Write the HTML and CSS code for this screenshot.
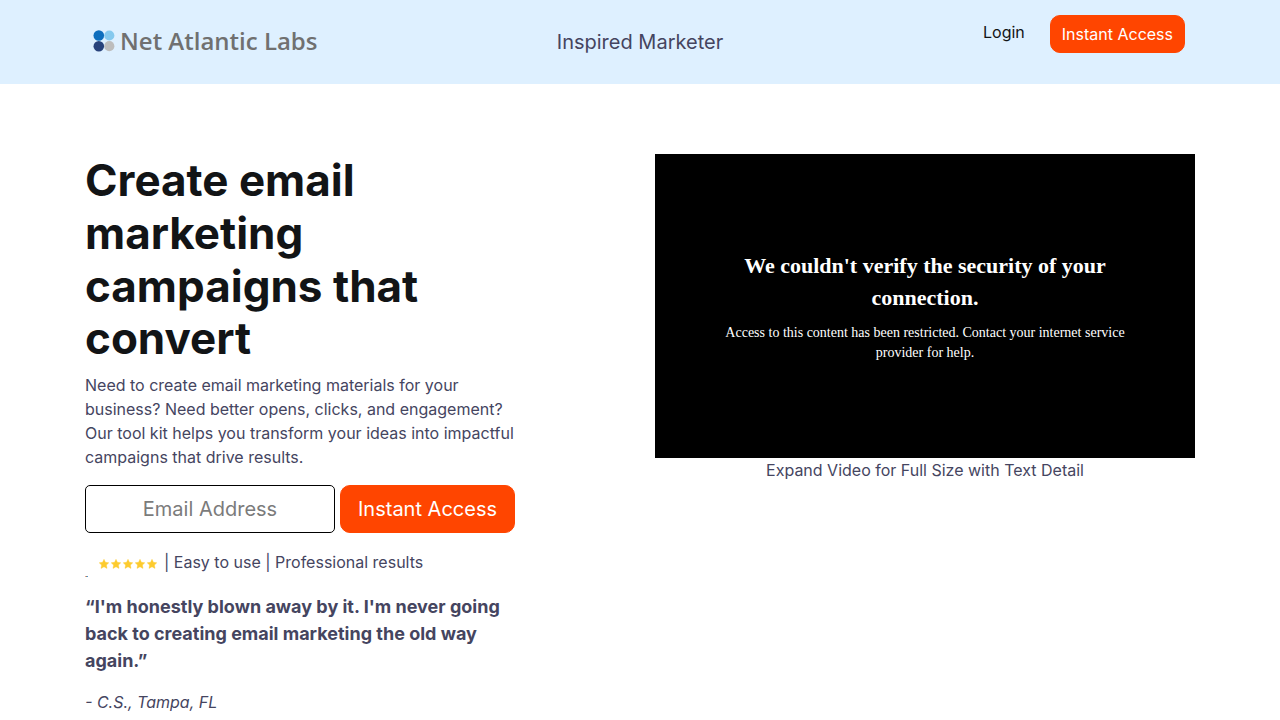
FILE: index.html
```html
<!DOCTYPE html>
<html lang="en">
<head>
    <meta charset="UTF-8">
    <meta name="viewport" content="width=device-width, initial-scale=1.0">
    <title>Inspired Marketer</title>
    <link rel="stylesheet" href="styles.css">
</head>
<body>
    <header class="site-header">
        <div class="container header-row">
            <a href="#" class="logo">
                <svg class="logo-mark" viewBox="0 0 22 22" aria-hidden="true">
                    <circle cx="5.8" cy="5.5" r="5.3" fill="#0d6ebd"/>
                    <circle cx="16.3" cy="5.5" r="5.1" fill="#85c9ee"/>
                    <circle cx="5.8" cy="16.2" r="5.3" fill="#27427b"/>
                    <circle cx="16.3" cy="16.2" r="5.1" fill="#bdbdbd"/>
                </svg>
                <span class="logo-text">Net Atlantic Labs</span>
            </a>
            <div class="site-title">Inspired Marketer</div>
            <nav class="header-nav">
                <a href="#" class="nav-link">Login</a>
                <a href="#" class="btn">Instant Access</a>
            </nav>
        </div>
    </header>

    <main class="container hero">
        <section class="hero-copy">
            <h1>Create email marketing campaigns that convert</h1>
            <p>Need to create email marketing materials for your business? Need better opens, clicks, and engagement? Our tool kit helps you transform your ideas into impactful campaigns that drive results.</p>

            <form class="signup">
                <input type="email" class="email-input" name="email" placeholder="Email Address" aria-label="Email Address">
                <button type="submit" class="btn btn-lg">Instant Access</button>
            </form>

            <div class="rating">
                <svg class="rating-badge" viewBox="0 0 3 1" aria-hidden="true">
                    <rect width="1" height="1" fill="#e8a08a"/>
                    <rect x="1" width="1" height="1" fill="#8c8a6a"/>
                    <rect x="2" width="1" height="1" fill="#4a90d9"/>
                </svg>
                <svg class="stars" viewBox="0 0 60 12" aria-hidden="true">
                    <defs>
                        <path id="star" d="M6 1.3 7.4 4.3 10.8 4.8 8.4 7.1 9 10.4 6 8.8 3 10.4 3.6 7.1 1.2 4.8 4.6 4.3Z" fill="#fdcb2e" stroke="#fdcb2e" stroke-width=".4" stroke-linejoin="round"/>
                    </defs>
                    <use href="#star"/>
                    <use href="#star" x="12"/>
                    <use href="#star" x="24"/>
                    <use href="#star" x="36"/>
                    <use href="#star" x="48"/>
                </svg>
                <span>| Easy to use | Professional results</span>
            </div>

            <blockquote class="quote">
                <p class="quote-text">“I'm honestly blown away by it. I'm never going back to creating email marketing the old way again.”</p>
                <p class="quote-author">- C.S., Tampa, FL</p>
            </blockquote>
        </section>

        <section class="hero-video">
            <div class="video">
                <h2>We couldn't verify the security of your connection.</h2>
                <p>Access to this content has been restricted. Contact your internet service provider for help.</p>
            </div>
            <div class="video-caption">Expand Video for Full Size with Text Detail</div>
        </section>
    </main>
</body>
</html>
```

FILE: styles.css
```css
* {
    box-sizing: border-box;
}
body {
    font-family: Inter, sans-serif;
    font-size: 16px;
    line-height: 1.5;
    margin: 0;
    background-color: #fff;
    color: #45455f;
}
p {
    margin: 0 0 16px;
}
.container {
    max-width: 1140px;
    margin: 0 auto;
    padding: 0 15px;
}

/* Header */
.site-header {
    background-color: #def0ff;
}
.header-row {
    display: grid;
    grid-template-columns: 1fr 1fr 1fr;
    min-height: 84px;
    align-items: center;
}
.logo {
    display: flex;
    align-items: center;
    gap: 5px;
    padding: 0 0 3px 8px;
    text-decoration: none;
}
.logo-mark {
    width: 22px;
    height: 22px;
}
.logo-text {
    font-family: "Open Sans", sans-serif;
    font-size: 24px;
    font-weight: 600;
    line-height: 30px;
    color: #707070;
}
.site-title {
    font-size: 20px;
    text-align: center;
}
.header-nav {
    display: flex;
    justify-content: flex-end;
    align-self: start;
    gap: 25px;
    padding: 15px 10px 0 0;
}
.nav-link {
    padding: 5px 0;
    color: #121416;
    text-decoration: none;
}
.btn {
    display: inline-block;
    padding: 6px 11px;
    border: 1px solid #ff4500;
    border-radius: 10px;
    background-color: #ff4500;
    color: #fff;
    font-family: inherit;
    font-size: 16px;
    line-height: 24px;
    text-decoration: none;
    cursor: pointer;
}
.btn-lg {
    padding: 8px 17px;
    font-size: 20px;
    line-height: 30px;
}

/* Hero */
.hero {
    display: grid;
    grid-template-columns: 1fr 1fr;
    gap: 30px;
    padding-top: 70px;
}
.hero-copy {
    max-width: 445px;
}
h1 {
    margin: 0 0 8px;
    font-size: 44px;
    font-weight: 700;
    line-height: 1.2;
    color: #121416;
}
.signup {
    display: flex;
    gap: 5px;
    margin-bottom: 16px;
}
.email-input {
    width: 250px;
    height: 48px;
    padding: 8px 16px;
    border: 1px solid #000;
    border-radius: 5px;
    font-family: inherit;
    font-size: 20px;
    text-align: center;
    color: #45455f;
}
.email-input::placeholder {
    color: #7b7b7b;
}
.rating {
    display: flex;
    align-items: flex-end;
    margin-bottom: 16px;
}
.rating span {
    padding: 1px 0 3px;
}
.rating-badge {
    width: 3px;
    height: 1px;
}
.stars {
    width: 60px;
    height: 12px;
    margin: 0 6px 7px 10px;
}
.quote {
    margin: 0;
}
.quote-text {
    font-size: 18px;
    font-weight: 700;
}
.quote-author {
    font-style: italic;
}

/* Video */
.video {
    display: flex;
    flex-direction: column;
    justify-content: center;
    min-height: 304px;
    padding: 0 64px;
    background-color: #000;
    color: #fff;
    font-family: "Liberation Serif", serif;
    text-align: center;
}
.video h2 {
    margin: 0 0 9px;
    font-size: 22px;
    line-height: 32px;
}
.video p {
    margin: 0;
    font-size: 14px;
    line-height: 20px;
}
.video-caption {
    text-align: center;
}

@media (max-width: 768px) {
    .header-row,
    .hero {
        grid-template-columns: 1fr;
    }
}
```
